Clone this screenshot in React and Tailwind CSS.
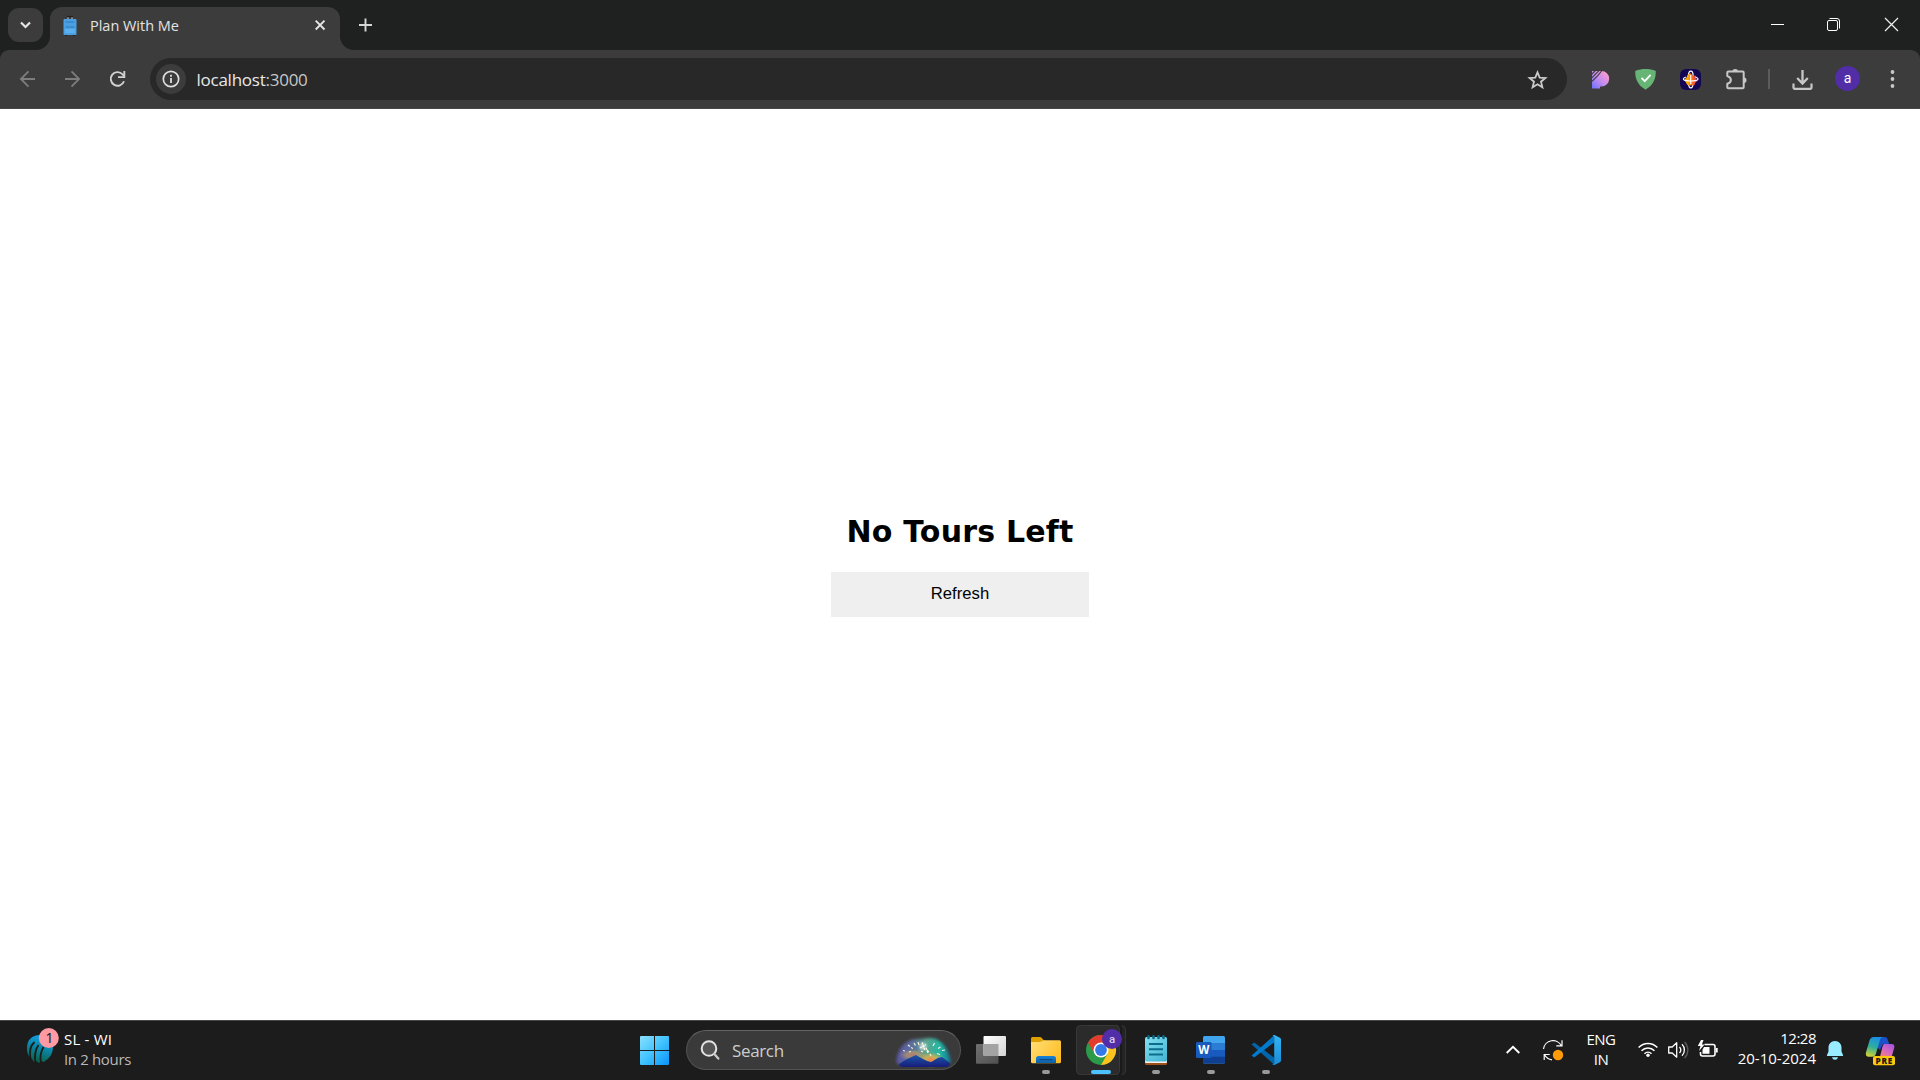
import React from "react";

const ui = "font-['Open_Sans','Noto_Sans',sans-serif]";

function Icon({ x, y, w, h, className = "", children }) {
  return (
    <svg
      width={w}
      height={h}
      viewBox={`${x} ${y} ${w} ${h}`}
      fill="none"
      className={`block shrink-0 ${className}`}
    >
      {children}
    </svg>
  );
}

function TabStrip() {
  return (
    <div className="flex h-[50px] bg-[#1f2120]">
      <button className="mt-2 ml-2 flex h-[34px] w-[35px] shrink-0 items-center justify-center rounded-[11px] bg-[#3c3c3c]">
        <Icon x={18} y={18} w={15} h={14}>
          <path d="M21 22.5l4.5 4.5 4.5-4.5" stroke="#e6e6e6" strokeWidth="2.2" />
        </Icon>
      </button>
      <Icon x={36} y={36} w={14} h={14} className="-ml-[7px] self-end">
        <path d="M50 36v14H36a14 14 0 0 0 14-14z" fill="#3c3c3c" />
      </Icon>
      <div className="mt-[7px] flex h-[43px] w-[290px] items-center rounded-t-[12px] bg-[#3c3c3c] pb-[7px]">
        <Icon x={62} y={14} w={17} h={21} className="ml-3">
          <path d="M68 21v-5M72 21v-5" stroke="#b9bcc0" strokeWidth="1.2" />
          <path d="M67 15.6h6" stroke="#222" strokeWidth="1.4" />
          <path d="M65 34.3h2M73 34.3h2" stroke="#222" strokeWidth="1.4" />
          <rect x="63.5" y="18" width="13" height="16" rx="1" fill="#4b9fe3" />
          <path d="M65.5 21h9M65.5 26h9" stroke="#2f7dbd" strokeWidth="1.2" />
          <path d="M65 28h10v4H65z" fill="#5cb0ee" />
        </Icon>
        <span className="ml-[11px] w-[223px] pt-[2px] text-[14.5px] leading-5 tracking-[-0.02px] whitespace-nowrap text-[#e3e3e3]">
          Plan With Me
        </span>
        <Icon x={313} y={18} w={14} h={14}>
          <path d="M315.7 20.7l8.8 8.8M324.500 20.7l-8.8 8.8" stroke="#e6e6e6" strokeWidth="1.9" />
        </Icon>
      </div>
      <Icon x={340} y={36} w={14} h={14} className="self-end">
        <path d="M340 36v14h14a14 14 0 0 1-14-14z" fill="#3c3c3c" />
      </Icon>
      <Icon x={356} y={16} w={18} h={18} className="mt-4 ml-0.5">
        <path d="M359 25h13M365.500 18.500v13" stroke="#d6d6d6" strokeWidth="1.9" />
      </Icon>
      <div className="ml-auto flex pt-4 pr-5">
        <Icon x={1768} y={16} w={20} h={18}>
          <path d="M1771 24.500h13" stroke="#fff" strokeWidth="1" />
        </Icon>
        <Icon x={1824} y={16} w={20} h={18} className="ml-9">
          <rect x="1827.500" y="20.500" width="10" height="10" rx="1.500" stroke="#fff" />
          <path d="M1829.500 18.500h7.500a2.500 2.500 0 0 1 2.500 2.500v7.500" stroke="#fff" />
        </Icon>
        <Icon x={1880} y={16} w={20} h={18} className="ml-9">
          <path d="M1885 18l13 13M1898 18l-13 13" stroke="#f0f0f0" strokeWidth="1.2" />
        </Icon>
      </div>
    </div>
  );
}

function Toolbar() {
  return (
    <div className="bg-[#1f2120]">
      <div className="flex h-[59px] items-center rounded-t-[9px] border-b border-[#484545] bg-[#3c3c3c]">
        <Icon x={16} y={67} w={24} h={24} className="ml-4">
          <path d="M35 79H21.500M28.500 71.300L20.900 79l7.600 7.700" stroke="#7d7d7d" strokeWidth="1.800" />
        </Icon>
        <Icon x={61} y={67} w={24} h={24} className="ml-[21px]">
          <path d="M65 79h13.500M71.500 71.300L79.100 79l-7.600 7.700" stroke="#7d7d7d" strokeWidth="1.800" />
        </Icon>
        <Icon x={106} y={67} w={24} h={24} className="ml-[21px]">
          <path d="M124 81.200A6.800 6.800 0 1 1 122.600 74.300L124 76" stroke="#d2d2d2" strokeWidth="1.900" />
          <path d="M124.300 71v6.100H118" stroke="#d2d2d2" strokeWidth="1.900" />
        </Icon>
        <div className="ml-5 flex h-[42px] w-[1417px] items-center rounded-full bg-[#282828]">
          <div className="ml-1.5 flex size-[30px] items-center justify-center rounded-full bg-[#3c3c3c]">
            <Icon x={161} y={69} w={20} h={20}>
              <circle cx="171" cy="79" r="7.700" stroke="#dedede" strokeWidth="1.700" />
              <path d="M171 78v5M171 74.800v1.900" stroke="#dedede" strokeWidth="1.800" />
            </Icon>
          </div>
          <div className="ml-[10.5px] pt-[2px] text-[17px] leading-6 tracking-[-0.25px] text-[#e8e8e8]">
            localhost<span className="text-[#c7c7c7]">:3000</span>
          </div>
          <Icon x={1526} y={67} w={23} h={23} className="mr-[18px] ml-auto">
            <path
              d="M1537.500 71.300l2.200 5.300 5.700.4-4.400 3.700 1.400 5.600-4.900-3-4.900 3 1.400-5.600-4.400-3.700 5.700-.4z"
              stroke="#c9c9c9"
              strokeWidth="1.800"
            />
          </Icon>
        </div>

        <Icon x={1588} y={67} w={24} h={24} className="ml-[21px]">
          <defs>
            <linearGradient id="pGrad" x1="1592" y1="88" x2="1608" y2="72" gradientUnits="userSpaceOnUse">
              <stop offset="0" stopColor="#6f73ff" />
              <stop offset=".5" stopColor="#c58cf0" />
              <stop offset="1" stopColor="#ff9fc6" />
            </linearGradient>
          </defs>
          <path d="M1592 71h9.500a7.700 7.700 0 0 1 0 15.400h-1.500V88.500h-8z" fill="url(#pGrad)" />
          <path d="M1591 75l5-5M1591.500 78.200l7.500-7.500M1592 81.400l6-6 4-4.900" stroke="#3c3c3c" strokeWidth="1.100" />
        </Icon>
        <Icon x={1633} y={67} w={25} h={25} className="ml-[21px]">
          <path d="M1645.500 69c3.500 0 7 .6 10.300 2 0 8-2.300 14-10.300 18.700-8-4.700-10.300-10.700-10.300-18.700 3.300-1.400 6.800-2 10.300-2z" fill="#66b574" />
          <path d="M1641.500 77.800l3.300 3.400 5.800-6.300" stroke="#fff" strokeWidth="1.800" />
        </Icon>
        <Icon x={1678} y={67} w={25} h={25} className="ml-5">
          <defs>
            <linearGradient id="starGrad" x1="1684" y1="79" x2="1697" y2="79" gradientUnits="userSpaceOnUse">
              <stop offset="0" stopColor="#ffc400" />
              <stop offset=".5" stopColor="#ff8a12" />
              <stop offset="1" stopColor="#e52b50" />
            </linearGradient>
          </defs>
          <rect x="1680" y="69" width="21" height="21" rx="6" fill="#130754" />
          <path d="M1688.500 76c0-6.500 4.600-6.500 4.600 0M1688.500 83c0 6.500 4.600 6.500 4.600 0" stroke="#fff" strokeWidth="1.200" />
          <path d="M1690.700 73.200l1.900 2.400 3.400.2.300 3.400 1 1.800-2 1.800-.8 2.300-3.800.4-3.500-.4-1.500-3-1.200-2.300 2.200-2.500.8-2.500z" fill="url(#starGrad)" />
          <path d="M1686 77c-4.500 1.800-3.500 4 4.700 4s9.200-2.200 4.700-4M1690.700 75v9" stroke="#fff" strokeWidth="1.100" />
        </Icon>
        <Icon x={1724} y={66} w={24} h={25} className="ml-[21px]">
          <path
            d="M1728.300 70.500h14.400a1 1 0 0 1 1 1v14.800a1 1 0 0 1-1 1h-14.400a1 1 0 0 1-1-1v-3.600c4.800-1.400 4.800-6.200 0-7.600v-3.600a1 1 0 0 1 1-1z"
            stroke="#c7c7c7"
            strokeWidth="2"
            strokeLinejoin="round"
          />
          <path d="M1732.500 70.200a2.700 2.300 0 0 1 5.400 0zM1744 76.600a2.500 2.700 0 0 1 0 5.400z" fill="#c7c7c7" />
        </Icon>
        <div className="ml-5 h-5 w-[2px] bg-[#5c5c5c]" />
        <Icon x={1790} y={66} w={25} h={25} className="ml-5">
          <path d="M1802.500 69v13M1797.200 77l5.300 5.500 5.300-5.500" stroke="#c7c7c7" strokeWidth="2.300" />
          <path d="M1793.500 82.500v4.300a1 1 0 0 0 1 1h16a1 1 0 0 0 1-1v-4.300" stroke="#c7c7c7" strokeWidth="2.200" />
        </Icon>
        <div className="mb-px ml-5 flex size-[25px] items-center justify-center rounded-full bg-[#512da8] pb-0.5 font-[Roboto,sans-serif] text-[14px] leading-none text-white">
          a
        </div>
        <Icon x={1888} y={67} w={9} h={24} className="ml-7">
          <circle cx="1892.500" cy="72" r="1.900" fill="#c7c7c7" />
          <circle cx="1892.500" cy="79" r="1.900" fill="#c7c7c7" />
          <circle cx="1892.500" cy="86" r="1.900" fill="#c7c7c7" />
        </Icon>
      </div>
    </div>
  );
}

function Page() {
  return (
    <main className="flex h-[911px] flex-col items-center bg-white">
      <h2 className="mt-[404px] h-[59px] font-['DejaVu_Sans',sans-serif] text-[30px] leading-[38px] font-bold tracking-[0.2px] whitespace-nowrap text-black">
        No Tours Left
      </h2>
      <button className="h-[45px] w-[258px] bg-[#efefef] pb-[2px] font-['Liberation_Sans',sans-serif] text-[16.67px] leading-5 text-black">
        Refresh
      </button>
    </main>
  );
}

function Widget() {
  return (
    <div className="flex w-[180px] items-start pl-6">
      <Icon x={24} y={1021} w={40} h={59}>
        <defs>
          <linearGradient id="ballGrad" x1="46" y1="1036" x2="38" y2="1064" gradientUnits="userSpaceOnUse">
            <stop offset="0" stopColor="#12a5e8" />
            <stop offset=".45" stopColor="#0b86a5" />
            <stop offset="1" stopColor="#0b5c3c" />
          </linearGradient>
        </defs>
        <path d="M40 1035c8 0 13 5 13 12 0 6-3 11-8 14l-1 1-3-1-2 2-3-2-2 1-2-3-3-3c-2-3-2-5-2-8 0-8 5-13 13-13z" fill="url(#ballGrad)" />
        <path d="M30.500 1059c-1.500-8-.5-13 4-17M35.500 1064c-1.500-9-.5-14 3-19M41 1063c-1.500-7-.5-11 2.500-16" stroke="#1c1c1c" strokeWidth="1.800" />
        <circle cx="48.800" cy="1038" r="10" fill="#ff99a4" />
        <text x="45.500" y="1043" fontSize="14" fill="#1c1c1c" fontFamily="Noto Sans, sans-serif">1</text>
      </Icon>
      <div className="pt-2 text-[15px] leading-5 whitespace-nowrap">
        <div className="tracking-[0.2px] text-white">SL - WI</div>
        <div className="tracking-[-0.35px] text-[#b9b9b9]">In 2 hours</div>
      </div>
    </div>
  );
}

const sparks =
  "M903 1050.500l2 .5M908 1045l2 1.500M914 1043l1.500 2.500M911 1047.500l2 1M918 1042l1 3M933 1046l1.500-3M938 1048.500l2.500-1.500M942 1050.500l3-.5M937 1053.500l3 1M930 1054l1 2M927 1050l2 2M909 1052l2-.5M921 1051l2 1";

function SearchBox() {
  return (
    <div className="mt-[9px] flex h-10 w-[275px] items-center rounded-full border border-[#525252] border-t-[#646464] bg-[#3a3a3a]">
      <Icon x={699} y={1038} w={22} h={24} className="ml-3">
        <circle cx="709" cy="1048.500" r="7.300" fill="#555" stroke="#e4e4e4" strokeWidth="2" />
        <path d="M714.300 1054l4 4.500" stroke="#c9c9c9" strokeWidth="2.400" strokeLinecap="round" />
      </Icon>
      <span className="ml-[11px] pt-[2px] text-[17px] leading-6 tracking-[-0.35px] text-[#cdcdcd]">Search</span>
      <Icon x={892} y={1031} w={64} h={38} className="mr-1 ml-auto">
        <defs>
          <linearGradient id="skyGrad" x1="896" y1="0" x2="952" y2="0" gradientUnits="userSpaceOnUse">
            <stop offset="0" stopColor="#5b55a8" />
            <stop offset=".3" stopColor="#5d6f9e" />
            <stop offset=".55" stopColor="#58a58c" />
            <stop offset=".78" stopColor="#21b8a6" />
            <stop offset="1" stopColor="#176b8f" />
          </linearGradient>
          <linearGradient id="hillGrad" x1="0" y1="1053" x2="0" y2="1067" gradientUnits="userSpaceOnUse">
            <stop offset="0" stopColor="#1b60b8" />
            <stop offset="1" stopColor="#171d78" />
          </linearGradient>
          <radialGradient id="sunGlow">
            <stop offset="0" stopColor="#ff7a45" />
            <stop offset=".45" stopColor="#e2b14e" stopOpacity=".8" />
            <stop offset="1" stopColor="#e2b14e" stopOpacity="0" />
          </radialGradient>
          <filter id="soft" x="-30%" y="-30%" width="160%" height="160%">
            <feGaussianBlur stdDeviation="1.8" />
          </filter>
        </defs>
        <path d="M897 1064c-2-12 8-25 20-25 6 0 8-1 13-1 12 0 20 13 21 25z" fill="url(#skyGrad)" filter="url(#soft)" />
        <ellipse cx="931" cy="1060" rx="14" ry="8" fill="url(#sunGlow)" />
        <ellipse cx="913" cy="1055" rx="14" ry="6" fill="url(#sunGlow)" opacity=".6" />
        <path d="M899 1065c4-5 9-6 17-10 5 3 10 6 15 7 4-2 7-5 11-5l8 6c0 3-2 4-5 4h-41c-3 0-4-1-5-2z" fill="url(#hillGrad)" />
        <circle cx="923" cy="1046.500" r="3.500" fill="#fff" opacity=".7" filter="url(#soft)" />
        <path d={sparks} stroke="#f4f3d2" strokeWidth="1.200" />
        <path d="M922 1042.500l3 8M920 1048l6-3.500M926 1048l2 5" stroke="#fffbe6" strokeWidth="1.300" strokeDasharray="2 1" />
      </Icon>
    </div>
  );
}

function Pill({ cx }) {
  return <rect x={cx - 4} y="1070" width="8" height="4" rx="2" fill="#999" />;
}

function AppIcons() {
  return (
    <div className="flex">
      <Icon x={961} y={1021} w={58} h={59}>
        <defs>
          <linearGradient id="tvW" x1="984" y1="1036" x2="1006" y2="1056" gradientUnits="userSpaceOnUse">
            <stop offset="0" stopColor="#fff" />
            <stop offset="1" stopColor="#d4d4d4" />
          </linearGradient>
          <linearGradient id="tvG" x1="976" y1="1044" x2="998" y2="1064" gradientUnits="userSpaceOnUse">
            <stop offset="0" stopColor="#707070" />
            <stop offset="1" stopColor="#505050" />
          </linearGradient>
        </defs>
        <rect x="976" y="1044" width="22.500" height="19.700" rx="1" fill="url(#tvG)" />
        <rect x="983.500" y="1036" width="22.500" height="20" rx="1" fill="url(#tvW)" />
        <path d="M983.500 1044h15v12h-14a1 1 0 0 1-1-1z" fill="#a3a3a3" />
      </Icon>
      <Icon x={1019} y={1021} w={55} h={59}>
        <defs>
          <linearGradient id="fold" x1="1031" y1="1040" x2="1061" y2="1063" gradientUnits="userSpaceOnUse">
            <stop offset="0" stopColor="#ffe07a" />
            <stop offset="1" stopColor="#ffb91a" />
          </linearGradient>
          <linearGradient id="foldB" x1="0" y1="1056" x2="0" y2="1063" gradientUnits="userSpaceOnUse">
            <stop offset="0" stopColor="#1583d8" />
            <stop offset="1" stopColor="#0e5fa8" />
          </linearGradient>
        </defs>
        <path d="M1031 1049v-10.500a1.500 1.500 0 0 1 1.500-1.500h7.500c2 0 3 3.500 5 3.500v8.500z" fill="#e0a100" />
        <path d="M1031 1044.500v-2.500h8c3 0 3.500-1.800 6-1.800h14.500a1.500 1.500 0 0 1 1.500 1.500v20a1.500 1.500 0 0 1-1.500 1.500h-27a1.500 1.500 0 0 1-1.500-1.500z" fill="url(#fold)" />
        <path d="M1036 1063v-4.500a2.500 2.500 0 0 1 2.500-2.500h15a2.500 2.500 0 0 1 2.500 2.500v4.500z" fill="url(#foldB)" />
        <path d="M1039.500 1059.600h13" stroke="#0a4a85" strokeWidth="1.200" />
        <Pill cx={1046} />
      </Icon>
      <Icon x={1074} y={1021} w={55} h={59}>
        <rect x="1084.500" y="1025.500" width="41" height="49" rx="4" fill="#242424" stroke="#353535" />
        <rect x="1117" y="1025" width="5" height="50" rx="2" fill="#1a1a1a" />
        <rect x="1076.500" y="1025.500" width="43" height="49" rx="4" fill="#2b2b2b" stroke="#383838" />
        <circle cx="1101" cy="1050" r="15" fill="#2a9b48" />
        <path d="M1101 1042.500h13a15 15 0 0 1-13 22.500l6.500-11.300z" fill="#fcc31e" />
        <path d="M1088 1042.500A15 15 0 0 1 1114 1042.500h-13l-6.500 11.200z" fill="#e33b2e" />
        <circle cx="1101" cy="1050" r="7.500" fill="#fff" />
        <circle cx="1101" cy="1050" r="5.900" fill="#3479e8" />
        <circle cx="1112" cy="1039" r="10" fill="#512da8" />
        <text x="1112" y="1042.700" textAnchor="middle" fontSize="11.500" fontWeight="500" fill="#d5cdea" fontFamily="Roboto, sans-serif">a</text>
        <rect x="1091" y="1070" width="20" height="4" rx="2" fill="#4cc2ff" />
      </Icon>
      <Icon x={1129} y={1021} w={55} h={59}>
        <defs>
          <linearGradient id="note" x1="1145" y1="1037" x2="1167" y2="1062" gradientUnits="userSpaceOnUse">
            <stop offset="0" stopColor="#86e0f0" />
            <stop offset="1" stopColor="#3fb3d2" />
          </linearGradient>
        </defs>
        <rect x="1145" y="1058" width="22" height="7" rx="1.500" fill="#a0511a" />
        <rect x="1145" y="1056" width="22" height="7" rx="1" fill="#f2f2f2" />
        <rect x="1145" y="1037" width="22" height="24.500" rx="1.500" fill="url(#note)" />
        <path d="M1148.500 1036.300v1.700M1153.500 1036.300v1.700M1158.500 1036.300v1.700M1163.500 1036.300v1.700" stroke="#0e6a86" strokeWidth="2.600" strokeLinecap="round" />
        <path d="M1149 1044h14M1149 1049.300h14M1149 1054.500h14" stroke="#0d6c8c" strokeWidth="1.900" />
        <Pill cx={1156} />
      </Icon>
      <Icon x={1184} y={1021} w={55} h={59}>
        <rect x="1203" y="1036" width="22" height="27.500" rx="1.500" fill="#41a5ee" />
        <path d="M1203 1043h22v7h-22z" fill="#2b7cd3" />
        <path d="M1203 1050h22v7h-22z" fill="#185abd" />
        <path d="M1203 1056.700h22v5.300a1.500 1.500 0 0 1-1.500 1.500h-19a1.500 1.500 0 0 1-1.500-1.500z" fill="#103f91" />
        <rect x="1196" y="1042" width="15.500" height="16" rx="1.300" fill="#185abd" />
        <text x="1203.700" y="1054" textAnchor="middle" fontSize="11.500" fontWeight="700" fill="#fff" fontFamily="Open Sans, sans-serif">W</text>
        <Pill cx={1211} />
      </Icon>
      <Icon x={1239} y={1021} w={55} h={59}>
        <defs>
          <linearGradient id="vs" x1="0" y1="1035" x2="0" y2="1065" gradientUnits="userSpaceOnUse">
            <stop offset="0" stopColor="#32b5f4" />
            <stop offset="1" stopColor="#1a8bd8" />
          </linearGradient>
        </defs>
        <path d="M1251.400 1044.800l2-1.800c.6-.4 1-.4 1.500 0l19.300 14.700v7l-22.800-20.500z" fill="#0065a9" />
        <path d="M1251.400 1055.200l2 1.800c.6.4 1 .4 1.500 0l19.300-14.700v-7l-22.800 20.500z" fill="#007acc" />
        <path d="M1273.200 1064.800c-.7-.3-1-.6-1.300-.9.900.7 2.300.1 2.300-1.100v-25.600c0-1.200-1.400-1.800-2.300-1.100.3-.4.600-.6 1.300-.9.700-.2 1.300-.1 1.800.1l5 2.400c.6.300 1 .9 1 1.700v21.200c0 .8-.4 1.400-1 1.700l-5 2.400c-.5.2-1.100.3-1.800.1z" fill="url(#vs)" />
        <Pill cx={1266} />
      </Icon>
    </div>
  );
}

function Tray() {
  return (
    <div className="ml-auto flex">
      <Icon x={1500} y={1021} w={26} h={59}>
        <path d="M1506.700 1053l6.300-6.200 6.300 6.200" stroke="#fff" strokeWidth="1.900" />
      </Icon>
      <Icon x={1538} y={1021} w={30} h={59} className="ml-3">
        <path d="M1543.500 1049a9.500 9.500 0 0 1 18-3M1562 1040.200v5.700h-5.700M1544.200 1060v-5.500h5.500M1544.500 1054.800a10 10 0 0 0 7.500 5" stroke="#fff" strokeWidth="1.200" />
        <circle cx="1558" cy="1055" r="5.200" fill="#ff9a0a" />
      </Icon>
      <div className="ml-[13px] w-10 pt-2 text-center text-[15px] leading-5 tracking-[-0.5px] text-white">
        <div>ENG</div>
        <div>IN</div>
      </div>
      <Icon x={1636} y={1021} w={25} h={59} className="ml-[15px]">
        <path d="M1638.600 1047.500a13 13 0 0 1 18.800 0M1641.500 1050.700a9 9 0 0 1 13 0M1644.500 1053.700a5 5 0 0 1 7 0" stroke="#fff" strokeWidth="1.500" />
        <circle cx="1648" cy="1055.300" r="1.700" fill="#fff" />
      </Icon>
      <Icon x={1666} y={1021} w={25} h={59} className="ml-[5px]">
        <path d="M1668.700 1047h3.500l4.500-4.200v14.400l-4.500-4.200h-3.500z" stroke="#fff" strokeWidth="1.300" strokeLinejoin="round" />
        <path d="M1679.500 1047a4.500 4.500 0 0 1 0 6M1682 1044.300a8 8 0 0 1 0 11.400" stroke="#fff" strokeWidth="1.300" />
        <path d="M1684.600 1042a11.500 11.500 0 0 1 0 16" stroke="#5b5b5b" strokeWidth="1.300" />
      </Icon>
      <Icon x={1696} y={1021} w={25} h={59} className="ml-[5px]">
        <path d="M1704.500 1044.500h8.500a2 2 0 0 1 2 2v7.500a2 2 0 0 1-2 2h-10.500a2 2 0 0 1-2-2v-2" stroke="#fff" strokeWidth="1.600" />
        <path d="M1704 1047h5.500v6.700h-7v-4z" fill="#fff" />
        <path d="M1716 1048h1.700v4.500h-1.700z" fill="#fff" />
        <path d="M1701 1040l-3.200 6h2.700l-1.500 5 5.500-6.500h-2.600l1.600-4.500z" fill="#fff" />
      </Icon>
      <div className="ml-2 w-[87px] pt-2 text-right text-[15px] leading-5 whitespace-nowrap text-white">
        <div className="-mt-px tracking-[-0.5px]">12:28</div>
        <div className="tracking-[0px]">20-10-2024</div>
      </div>
      <Icon x={1824} y={1021} w={22} h={59} className="ml-2">
        <path d="M1835 1041c4 0 6.500 3 6.500 6.500v4l1.500 3.500c.2.600 0 1-.6 1h-14.800c-.6 0-.8-.4-.6-1l1.500-3.500v-4c0-3.500 2.500-6.500 6.500-6.500zM1832 1057.300h6c-.4 1.700-1.500 2.500-3 2.500s-2.600-.8-3-2.500z" fill="#99ebff" />
      </Icon>
      <Icon x={1862} y={1021} w={38} h={59} className="mr-5 ml-4">
        <defs>
          <linearGradient id="cpA" x1="1876" y1="1037" x2="1870" y2="1057" gradientUnits="userSpaceOnUse">
            <stop offset="0" stopColor="#1890e8" />
            <stop offset=".5" stopColor="#2fae9a" />
            <stop offset="1" stopColor="#d9d530" />
          </linearGradient>
          <linearGradient id="cpB" x1="1892" y1="1043" x2="1882" y2="1060" gradientUnits="userSpaceOnUse">
            <stop offset="0" stopColor="#a251e0" />
            <stop offset=".5" stopColor="#d66ac0" />
            <stop offset="1" stopColor="#ff8a5c" />
          </linearGradient>
        </defs>
        <path d="M1877 1037h7.500c2 0 2.800 1.300 3.400 3l1.200 4h-4c-2 0-3 .8-3.600 2.500l-1.500 3.500-3-3z" fill="#1c50c8" />
        <path d="M1885 1044h6.500c2.600 0 3.400 1.500 2.600 4.200l-2.800 9.800h-11l-1 1.500 2.500-10c.7-3.500 1.200-5.500 3.200-5.500z" fill="url(#cpB)" />
        <path d="M1874 1037h9c-2 .3-2.600 1.500-3.200 3.500l-3.800 13c-.7 2.300-1.800 3.300-4 3.300h-3c-2.800 0-3.700-2-3-4.500l3.300-11c.9-3 2-4.300 4.700-4.300z" fill="url(#cpA)" />
        <rect x="1873" y="1056" width="22" height="9.200" rx="2" fill="#ffc80a" />
        <text x="1884.200" y="1063.600" textAnchor="middle" fontSize="8.200" fontWeight="800" letterSpacing=".7" fill="#1c1c1c" fontFamily="Open Sans, sans-serif">PRE</text>
      </Icon>
    </div>
  );
}

function Taskbar() {
  return (
    <div className="flex h-[60px] border-t border-[#474747] bg-[#1c1c1c]">
      <Widget />
      <Icon x={630} y={1021} w={50} h={59} className="ml-[450px]">
        <defs>
          <linearGradient id="win" x1="640" y1="1036" x2="669" y2="1065" gradientUnits="userSpaceOnUse">
            <stop offset="0" stopColor="#8be0ff" />
            <stop offset=".5" stopColor="#41c3ff" />
            <stop offset="1" stopColor="#0a93fa" />
          </linearGradient>
        </defs>
        <path d="M641 1036h13v14h-14v-13a1 1 0 0 1 1-1zM655 1036h13a1 1 0 0 1 1 1v13h-14zM640 1051h14v14h-13a1 1 0 0 1-1-1zM655 1051h14v13a1 1 0 0 1-1 1h-13z" fill="url(#win)" />
      </Icon>
      <div className="ml-1.5">
        <SearchBox />
      </div>
      <AppIcons />
      <Tray />
    </div>
  );
}

export default function App() {
  return (
    <div className={`h-[1080px] w-[1920px] overflow-hidden ${ui}`}>
      <TabStrip />
      <Toolbar />
      <Page />
      <Taskbar />
    </div>
  );
}
